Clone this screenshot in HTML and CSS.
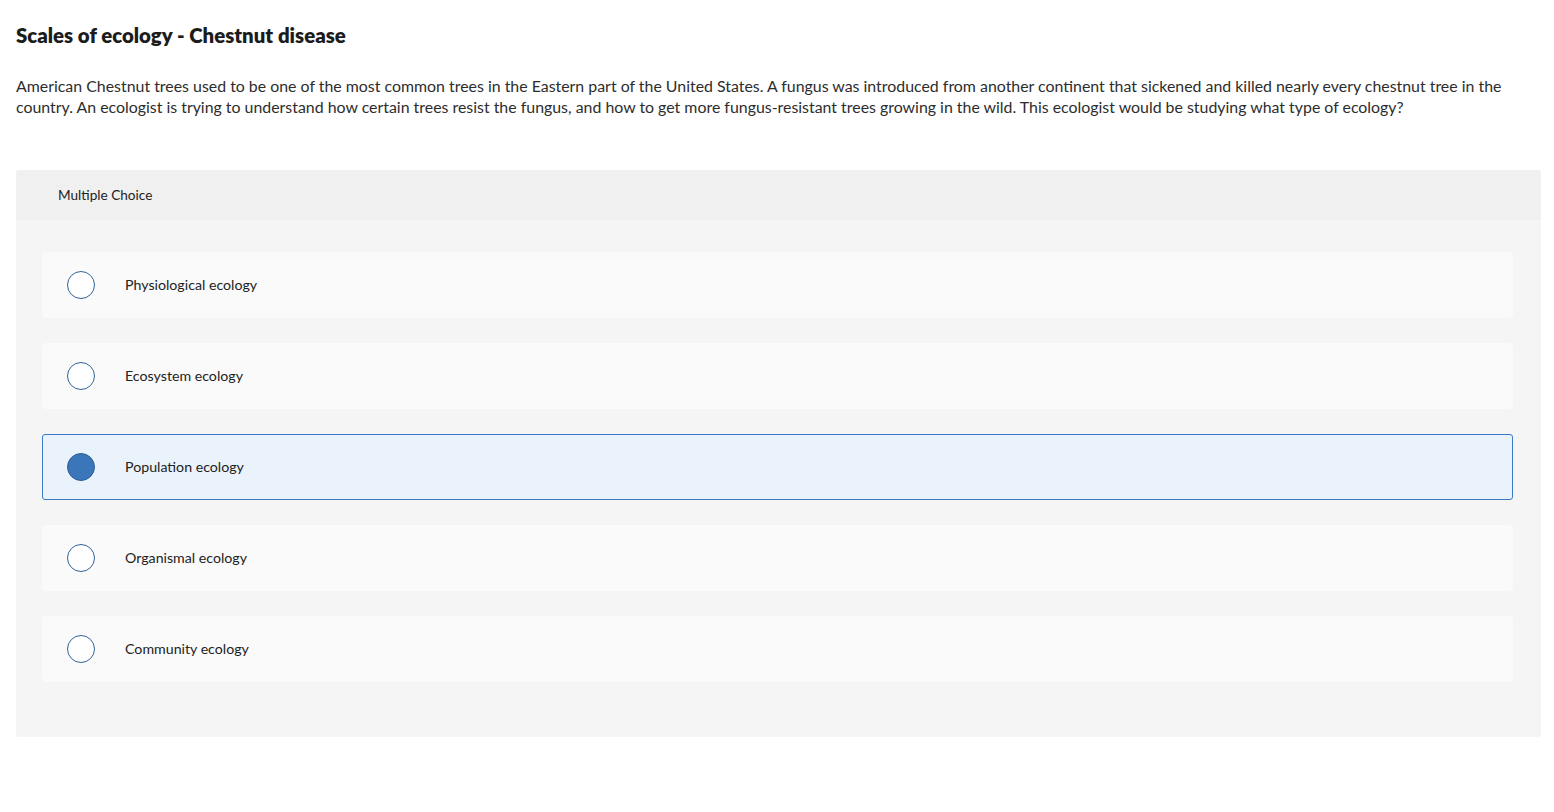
FILE: index.html
```html
<!DOCTYPE html>
<html>
<head>
<meta charset="utf-8">
<link rel="stylesheet" href="styles.css">
</head>
<body>
<div class="page">
  <h1 class="title">Scales of ecology - Chestnut disease</h1>
  <p class="prompt">American Chestnut trees used to be one of the most common trees in the Eastern part of the United States. A fungus was introduced from another continent that sickened and killed nearly every chestnut tree in the country. An ecologist is trying to understand how certain trees resist the fungus, and how to get more fungus-resistant trees growing in the wild. This ecologist would be studying what type of ecology?</p>
  <div class="mc">
    <div class="mc-head">Multiple Choice</div>
    <div class="mc-body">
      <div class="opt"><span class="radio"></span><span class="label">Physiological ecology</span></div>
      <div class="opt"><span class="radio"></span><span class="label">Ecosystem ecology</span></div>
      <div class="opt selected"><span class="radio"></span><span class="label">Population ecology</span></div>
      <div class="opt"><span class="radio"></span><span class="label">Organismal ecology</span></div>
      <div class="opt"><span class="radio"></span><span class="label">Community ecology</span></div>
    </div>
  </div>
</div>
</body>
</html>
```

FILE: styles.css
```css
html, body { margin: 0; padding: 0; background: #fff; }
body { font-family: "Lato", "Open Sans", sans-serif; color: #333; }
.page { padding: 0 13px 0 16px; }
.title {
  margin: 0;
  padding-top: 22px;
  font-size: 20.4px;
  line-height: 26px;
  font-weight: 800;
  color: #1c1c1c;
}
.prompt {
  margin: 0;
  padding-top: 27px;
  font-size: 15.9px;
  line-height: 21px;
  color: #2d2d2d;
}
.mc {
  margin-top: 53px;
  background: #f5f5f5;
  border-radius: 3px;
}
.mc-head {
  height: 50px;
  display: flex;
  align-items: center;
  padding-left: 42px;
  background: #f0f0f0;
  font-size: 13.6px;
  color: #222;
  border-radius: 3px 3px 0 0;
}
.mc-body {
  padding: 32px 28px 55px 26px;
  display: flex;
  flex-direction: column;
  gap: 25px;
}
.opt {
  height: 66px;
  box-sizing: border-box;
  display: flex;
  align-items: center;
  background: #fafafa;
  border: 1px solid #fafafa;
  border-radius: 3px;
  padding-left: 24px;
}
.radio {
  width: 26px;
  height: 26px;
  border: 1.5px solid #2f6399;
  border-radius: 50%;
  background: #fff;
  flex: none;
}
.label {
  margin-left: 30px;
  padding-bottom: 2px;
  font-size: 14.2px;
  color: #222;
}
.opt.selected {
  background: #eaf2fc;
  border-color: #3a7bc7;
}
.opt.selected .radio {
  background: #3a76b9;
  border-color: #2d5f96;
}
```
